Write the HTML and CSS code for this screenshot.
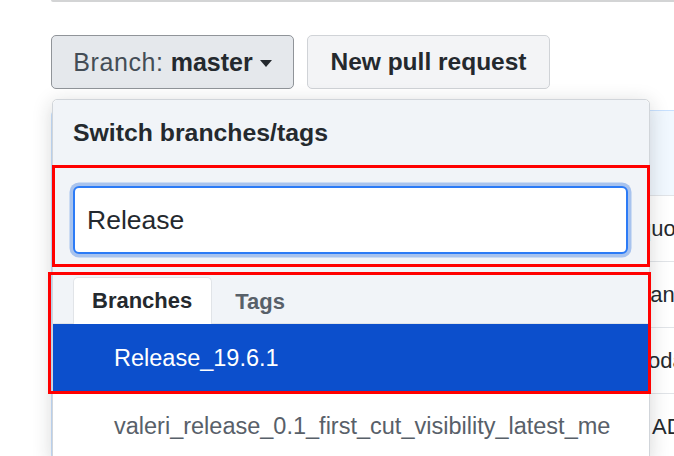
FILE: index.html
```html
<!DOCTYPE html>
<html>
<head>
<meta charset="utf-8">
<link rel="stylesheet" href="styles.css">
</head>
<body>
<div class="prev-box"></div>
<div class="toolbar">
  <div class="branch-select">
    <button class="btn btn-branch"><span class="lbl">Branch:</span> <b>master</b><span class="caret"></span></button>
    <div class="dropdown">
      <div class="dd-header">Switch branches/tags</div>
      <div class="dd-filter">
        <div class="dd-input">Release</div>
      </div>
      <div class="dd-tabs">
        <div class="tab active">Branches</div>
        <div class="tab">Tags</div>
      </div>
      <div class="dd-list">
        <div class="dd-item selected">Release_19.6.1</div>
        <div class="dd-item">valeri_release_0.1_first_cut_visibility_latest_me</div>
      </div>
      <div class="annot annot-filter"></div>
      <div class="annot annot-tabs"></div>
    </div>
  </div>
  <button class="btn btn-pr">New pull request</button>
</div>
<div class="files">
  <div class="files-head"></div>
  <div class="file-row"><span class="msg m1">quota</span></div>
  <div class="file-row"><span class="msg m2">handle</span></div>
  <div class="file-row"><span class="msg m3">today</span></div>
  <div class="file-row"><span class="msg m4">ADD</span></div>
</div>
</body>
</html>
```

FILE: styles.css
```css
html, body {
  margin: 0;
  padding: 0;
}
body {
  width: 674px;
  height: 456px;
  overflow: hidden;
  background: #ffffff;
  font-family: "Liberation Sans", Arial, sans-serif;
  color: #24292e;
}
.prev-box {
  margin-left: 51px;
  height: 2px;
  background: #d3d4d5;
  border-bottom-left-radius: 2px;
}
.toolbar {
  display: flex;
  gap: 13px;
  margin-top: 33px;
  padding-left: 51px;
  position: relative;
  z-index: 2;
}
.branch-select {
  position: relative;
}
.btn {
  box-sizing: border-box;
  width: 243px;
  height: 54px;
  border-radius: 5px;
  font-family: "Liberation Sans", Arial, sans-serif;
  font-size: 24.5px;
  color: #24292e;
  display: flex;
  align-items: center;
  justify-content: center;
  padding: 0;
  margin: 0;
}
.btn-branch {
  background: #e5e8ec;
  border: 1.5px solid #909499;
  font-size: 25px;
}
.btn-branch .lbl {
  color: #444d56;
  white-space: pre;
  letter-spacing: 0.6px;
}
.btn-branch b {
  margin-left: 7px;
  font-weight: bold;
}
.caret {
  display: inline-block;
  width: 0;
  height: 0;
  border-top: 7px solid #24292e;
  border-left: 6.5px solid transparent;
  border-right: 6.5px solid transparent;
  margin-left: 7px;
  margin-top: 2px;
}
.btn-pr {
  background: #f3f4f6;
  border: 1.5px solid #d0d3d7;
  font-weight: bold;
}
.dropdown {
  position: absolute;
  left: 1px;
  top: 64px;
  width: 598px;
  box-sizing: border-box;
  border: 1px solid #d1d5da;
  border-radius: 5px;
  background: #ffffff;
  box-shadow: 0 4px 20px rgba(27, 31, 35, 0.18);
}
.dd-header {
  height: 65px;
  display: flex;
  align-items: center;
  padding-left: 20px;
  background: #f1f4f8;
  font-weight: bold;
  font-size: 24.8px;
  border-radius: 5px 5px 0 0;
}
.dd-filter {
  background: #f1f4f8;
  padding: 21px 21px 13px 20px;
}
.dd-input {
  box-sizing: border-box;
  height: 68px;
  border: 2px solid #2c7bf6;
  border-radius: 6px;
  background: #ffffff;
  box-shadow: 0 0 0 3.5px #a8c3ee;
  display: flex;
  align-items: center;
  padding-left: 12px;
  font-size: 26.5px;
  color: #24292e;
}
.dd-tabs {
  display: flex;
  align-items: flex-end;
  gap: 4px;
  height: 56px;
  padding-left: 20px;
  background: #f1f4f8;
  border-bottom: 1px solid #e1e4e8;
}
.tab {
  box-sizing: border-box;
  height: 46px;
  padding: 0 19px 0 18px;
  display: flex;
  align-items: center;
  font-weight: bold;
  font-size: 22px;
  color: #586069;
  border: 1px solid transparent;
  border-bottom: none;
  border-radius: 5px 5px 0 0;
  margin-bottom: -1px;
}
.tab.active {
  background: #ffffff;
  border-color: #e1e4e8;
  color: #24292e;
  height: 47px;
}
.dd-item {
  height: 68px;
  display: flex;
  align-items: center;
  padding-left: 61px;
  font-size: 23.5px;
  color: #586069;
  white-space: nowrap;
}
.dd-item.selected {
  background: #0c4fcc;
  color: #ffffff;
}
.annot {
  position: absolute;
  border: 3px solid #ff0000;
  box-sizing: border-box;
}
.annot-filter {
  left: -1px;
  top: 65px;
  width: 598px;
  height: 102px;
}
.annot-tabs {
  left: -5px;
  top: 172px;
  width: 603px;
  height: 122px;
}
.files {
  margin-top: 21px;
  margin-left: 51px;
  width: 720px;
  border: 1px solid #c8e1ff;
  border-radius: 5px;
  position: relative;
  z-index: 1;
}
.files-head {
  height: 84px;
  background: #f1f8ff;
  border-radius: 5px 5px 0 0;
}
.file-row {
  box-sizing: border-box;
  height: 66px;
  border-top: 1px solid #e1e4e8;
  display: flex;
  align-items: center;
  font-size: 22px;
  color: #24292e;
}
.msg {
  white-space: nowrap;
}
.m1 { padding-left: 587px; }
.m2 { padding-left: 586px; }
.m3 { padding-left: 590px; }
.m4 { padding-left: 600px; }
```
